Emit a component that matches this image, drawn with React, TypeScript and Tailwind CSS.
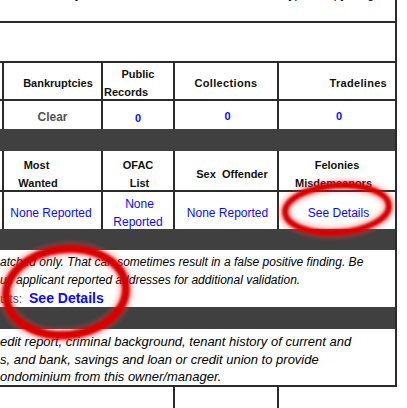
import React from "react";

const ln = "border-[#2b2b2b]";
const blue = "text-[#0a0aff]";

function Cell({ w, children, className = "" }: { w: string; children?: React.ReactNode; className?: string }) {
  return <div className={`${w} ${ln} border-l-2 flex flex-col items-center justify-center ${className}`}>{children}</div>;
}

function Ring({ cx, cy, rx, ry, rot, sw }: { cx: number; cy: number; rx: number; ry: number; rot: number; sw: number }) {
  return (
    <g transform={`rotate(${rot} ${cx} ${cy})`}>
      <ellipse cx={cx} cy={cy} rx={rx} ry={ry} fill="none" stroke="#ff3030" strokeOpacity="0.35" strokeWidth={sw + 6} filter="url(#soft)" />
      <ellipse cx={cx} cy={cy} rx={rx} ry={ry} fill="none" stroke="#d90000" strokeWidth={sw} filter="url(#edge)" />
    </g>
  );
}

export default function App() {
  return (
    <div className="relative h-[408px] w-[407px] overflow-hidden bg-white font-['Liberation_Sans',Arial,sans-serif] text-[12px] text-black">
      <div className={`w-[397px] border-r-2 ${ln}`}>
        {/* row cut off at the top of the page */}
        <div className={`h-[23px] overflow-hidden border-b-2 ${ln}`}>
          <p className="-mt-[13px] whitespace-nowrap italic leading-[14px]">
            of rental history and the current residence, unit, lease type a copy for good standing
          </p>
        </div>
        <div className={`h-[40px] border-b-2 ${ln}`} />

        {/* credit summary */}
        <div className={`flex h-[38px] border-b-2 pl-[2px] ${ln} text-[11px] font-bold leading-[18px] text-[#111]`}>
          <Cell w="w-[99px]" className="pt-[4px] pl-[11px]">Bankruptcies</Cell>
          <Cell w="w-[72px]" className="pt-[4px] !items-stretch">
            <span className="text-center">Public</span>
            <span className="pl-[1px]">Records</span>
          </Cell>
          <Cell w="w-[104px]" className="pt-[4px] tracking-[0.35px]">Collections</Cell>
          <Cell w="w-[118px]" className="pt-[4px] !items-end pr-2 tracking-[0.3px]">Tradelines</Cell>
        </div>
        <div className="flex h-[28px] pl-[2px] text-[11px] font-bold">
          <Cell w="w-[99px]" className="pt-[4px] text-[12px] text-[#555]">Clear</Cell>
          <Cell w="w-[72px]" className={`pt-[7px] ${blue}`}>0</Cell>
          <Cell w="w-[104px]" className={`pt-[3px] pl-[3px] ${blue}`}>0</Cell>
          <Cell w="w-[118px]" className={`pt-[3px] pl-[4px] ${blue}`}>0</Cell>
        </div>
        <div className="h-[22px] bg-[#404040]" />

        {/* background checks */}
        <div className={`flex h-[41px] border-b-2 pl-[2px] ${ln} text-[11px] font-bold leading-[18px] text-[#111]`}>
          <Cell w="w-[99px]" className="pt-[6px] !items-start">
            <div className="flex w-[68px] flex-col items-center">
              <span className="pr-[3px]">Most</span>
              <span>Wanted</span>
            </div>
          </Cell>
          <Cell w="w-[72px]" className="pt-[6px]">
            <span>OFAC</span>
            <span className="pl-[3px]">List</span>
          </Cell>
          <Cell w="w-[104px]" className="pt-[6px] pl-[12px] whitespace-pre">Sex  Offender</Cell>
          <Cell w="w-[118px]" className="pt-[6px]">
            <span>Felonies</span>
            <span className="pr-[7px]">Misdemeanors</span>
          </Cell>
        </div>
        <div className={`flex h-[37px] pl-[2px] leading-[18px] ${blue}`}>
          <Cell w="w-[99px]" className="pt-[5px] pr-[3px]">None Reported</Cell>
          <Cell w="w-[72px]" className="pt-[5px]">
            <span className="pl-[3px]">None</span>
            <span>Reported</span>
          </Cell>
          <Cell w="w-[104px]" className="pt-[5px] pl-[3px]">None Reported</Cell>
          <Cell w="w-[118px]" className="pt-[5px] pl-[3px]">See Details</Cell>
        </div>
        <div className="h-[21px] bg-[#404040]" />

        <div className="h-[57px] pt-[3px] leading-[18px]">
          <p className="italic">atched only. That can sometimes result in a false positive finding. Be</p>
          <p className="italic">us applicant reported addresses for additional validation.</p>
          <p>
            <span className="text-[#444]">ults:</span>
            <span className={`ml-[7px] text-[14px] font-bold ${blue}`}>See Details</span>
          </p>
        </div>
        <div className="h-[22px] bg-[#404040]" />

        <div className={`h-[58px] border-b-2 pt-[4px] text-[13px] italic leading-[17.5px] ${ln}`}>
          <p>edit report, criminal background, tenant history of current and</p>
          <p>s, and bank, savings and loan or credit union to provide</p>
          <p>ondominium from this owner/manager.</p>
        </div>
      </div>

      {/* next table, only its column rules show */}
      <div className="flex h-[30px] pl-[2px]">
        <div className="w-[99px]" />
        <div className="w-[72px]" />
        <div className={`w-[104px] border-l-2 ${ln}`} />
        <div className={`w-[118px] border-l-2 ${ln}`} />
      </div>

      {/* red marker rings drawn over the report */}
      <svg className="pointer-events-none absolute left-0 top-0" width="407" height="408">
        <defs>
          <filter id="soft" x="-20%" y="-20%" width="140%" height="140%">
            <feGaussianBlur stdDeviation="2.2" />
          </filter>
          <filter id="edge" x="-20%" y="-20%" width="140%" height="140%">
            <feGaussianBlur stdDeviation="0.8" />
          </filter>
        </defs>
        <Ring cx={337} cy={209} rx={52} ry={23.5} rot={-4} sw={6} />
        <Ring cx={66} cy={292} rx={60} ry={43} rot={-6} sw={8} />
      </svg>
    </div>
  );
}
